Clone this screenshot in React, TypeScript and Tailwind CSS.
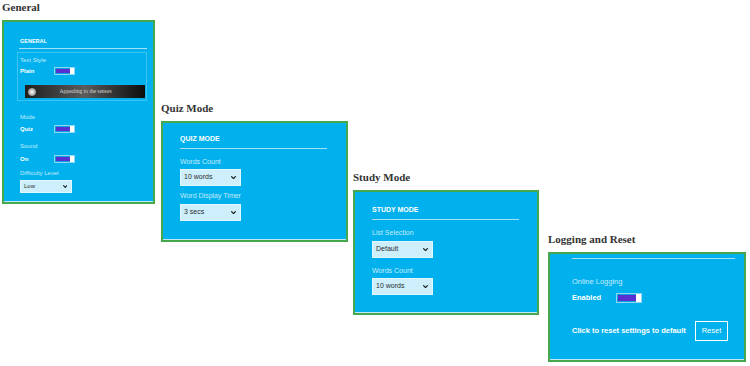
import { ReactNode } from 'react';

const sans = { fontFamily: '"Liberation Sans", Arial, sans-serif' };

function Heading({ children }: { children: ReactNode }) {
  return (
    <div
      className="h-[20px] text-[11px] leading-[14px] font-bold text-[#333]"
      style={{ fontFamily: '"Liberation Serif", "Times New Roman", serif' }}
    >
      {children}
    </div>
  );
}

function Chevron({ size = 5 }: { size?: number }) {
  return (
    <svg width={size} height={size * 0.7} viewBox="0 0 8 5.6" className="shrink-0">
      <polyline points="1,1 4,4.2 7,1" fill="none" stroke="#222" strokeWidth="2" strokeLinecap="round" strokeLinejoin="round" />
    </svg>
  );
}

// select box used in quiz / study panels
function Select({ value }: { value: string }) {
  return (
    <div className="flex h-[17px] w-[61px] items-center justify-between border border-[#e2f7ff] bg-[#cdeffc] pl-[3px] pr-[4px] text-[7px] text-[#2b2b2b]">
      <span>{value}</span>
      <Chevron />
    </div>
  );
}

function Toggle({ small = false }: { small?: boolean }) {
  return (
    <div
      className={
        small
          ? 'flex h-[8px] w-[21px] border border-[#8fd6f5] bg-[#0aa3e0]'
          : 'flex h-[10px] w-[26px] border border-[#8fd6f5] bg-[#0aa3e0]'
      }
    >
      <div className="my-px ml-px flex-1 bg-[#5a2fcf]" />
      <div className={small ? 'w-[4px] bg-white' : 'w-[5px] bg-white'} />
    </div>
  );
}

function Panel({ className, children }: { className: string; children: ReactNode }) {
  return (
    <div
      className={`border-2 border-[#46a84c] bg-[#00b1ee] shadow-[inset_0_-1px_0_#bfe9f8] ${className}`}
      style={sans}
    >
      {children}
    </div>
  );
}

function Label({ children, className = '' }: { children: ReactNode; className?: string }) {
  return <div className={`flex items-center text-[#c9ecfb] ${className}`}>{children}</div>;
}

function GeneralPanel() {
  return (
    <Panel className="h-[184px] w-[153px] pl-[16px] pr-[6px] pt-[15px] text-[6px]">
      <div className="h-[8px] text-[5.5px] leading-[8px] font-bold text-white">GENERAL</div>
      <div className="mt-[3px] -ml-px h-px bg-[#a6e0f7]" />
      <div className="mt-[3px] -ml-[3px] border border-[#3fc3f0] pl-[2px] pb-[2px] pt-[3px]">
        <Label className="h-[8px]">Text Style</Label>
        <div className="mt-[2px] flex h-[10px] items-center">
          <span className="w-[34px] font-bold text-white">Plain</span>
          <Toggle small />
        </div>
        <div className="mt-[9px] ml-[5px] flex h-[13px] w-[120px] items-center bg-gradient-to-r from-[#1f1f1f] via-[#5c5c5c] to-[#0d0d0d]">
          <div className="ml-[3px] h-[8px] w-[8px] rounded-full bg-[radial-gradient(circle,#ffffff_0%,#bdbdbd_45%,#4a4a4a_100%)]" />
          <span
            className="flex-1 pr-[10px] text-center text-[5.5px] text-[#d8d8d8]"
            style={{ fontFamily: '"Liberation Serif", serif' }}
          >
            Appealing to the senses
          </span>
        </div>
      </div>
      <Label className="mt-[12px] h-[8px]">Mode</Label>
      <div className="mt-[3px] flex h-[10px] items-center">
        <span className="w-[34px] font-bold text-white">Quiz</span>
        <Toggle small />
      </div>
      <Label className="mt-[8px] h-[8px]">Sound</Label>
      <div className="mt-[4px] flex h-[10px] items-center">
        <span className="w-[34px] font-bold text-white">On</span>
        <Toggle small />
      </div>
      <Label className="mt-[5px] h-[8px]">Difficulty Level</Label>
      <div className="mt-[3px] flex h-[13px] w-[52px] items-center justify-between border border-[#e2f7ff] bg-[#cdeffc] pl-[3px] pr-[4px] text-[6px] text-[#2b2b2b]">
        <span>Low</span>
        <Chevron size={4.5} />
      </div>
    </Panel>
  );
}

export default function App() {
  return (
    <div className="flex h-[366px] w-[750px] items-start overflow-hidden bg-white">
      <div className="ml-[2px]">
        <Heading>General</Heading>
        <GeneralPanel />
      </div>

      <div className="ml-[6px] mt-[101px]">
        <Heading>Quiz Mode</Heading>
        <Panel className="h-[121px] w-[187px] pl-[17px] pr-[19px] pt-[11px] text-[7px]">
          <div className="h-[10px] leading-[10px] font-bold text-white">QUIZ MODE</div>
          <div className="mt-[4px] h-px bg-[#a6e0f7]" />
          <Label className="mt-[8px] h-[10px]">Words Count</Label>
          <div className="mt-[2px]">
            <Select value="10 words" />
          </div>
          <Label className="mt-[5px] h-[10px]">Word Display Timer</Label>
          <div className="mt-[3px]">
            <Select value="3 secs" />
          </div>
        </Panel>
      </div>

      <div className="ml-[5px] mt-[170px]">
        <Heading>Study Mode</Heading>
        <Panel className="h-[125px] w-[186px] pl-[17px] pr-[18px] pt-[13px] text-[7px]">
          <div className="h-[10px] leading-[10px] font-bold text-white">STUDY MODE</div>
          <div className="mt-[4px] h-px bg-[#a6e0f7]" />
          <Label className="mt-[8px] h-[10px]">List Selection</Label>
          <div className="mt-[3px]">
            <Select value="Default" />
          </div>
          <Label className="mt-[8px] h-[10px]">Words Count</Label>
          <div className="mt-[2px]">
            <Select value="10 words" />
          </div>
        </Panel>
      </div>

      <div className="ml-[9px] mt-[232px]">
        <Heading>Logging and Reset</Heading>
        <Panel className="h-[110px] w-[198px] pl-[22px] pr-[9px] pt-[4px] text-[7.5px]">
          <div className="h-px bg-[#a6e0f7]" />
          <Label className="mt-[18px] h-[10px]">Online Logging</Label>
          <div className="mt-[5px] flex h-[11px] items-center">
            <span className="w-[44px] font-bold text-white">Enabled</span>
            <Toggle />
          </div>
          <div className="mt-[18px] flex h-[20px] items-center">
            <span className="w-[123px] font-bold text-white">Click to reset settings to default</span>
            <div className="flex h-[20px] w-[33px] items-center justify-center border-[1.5px] border-white text-white">
              Reset
            </div>
          </div>
        </Panel>
      </div>
    </div>
  );
}
